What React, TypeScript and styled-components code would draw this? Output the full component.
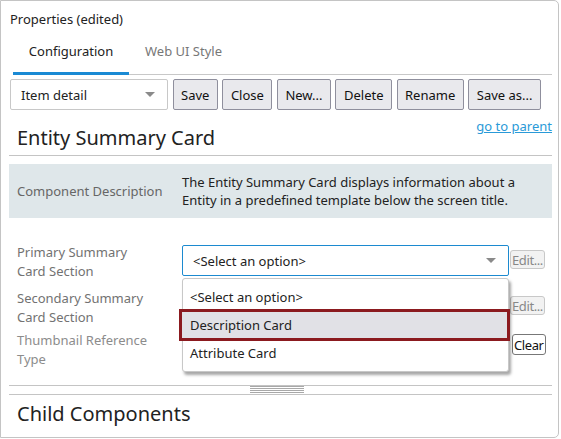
import styled, { createGlobalStyle } from "styled-components";

const GlobalStyle = createGlobalStyle`
  * { box-sizing: border-box; }
  body {
    margin: 0;
    background: #ffffff;
    font-family: "Segoe UI", "Noto Sans", sans-serif;
    font-size: 13px;
    color: #222;
  }
`;

const Panel = styled.div`
  position: relative;
  width: 559px;
  height: 438px;
  border: 1px solid #c4c4c4;
  border-radius: 0 5px 5px 0;
  padding: 0 6px 0 8px;
  overflow: hidden;
`;

const Title = styled.div`
  height: 37px;
  line-height: 37px;
  padding-left: 1px;
`;

const TabBar = styled.div`
  display: flex;
  margin-left: 4px;
  border-bottom: 1px solid #c8c8c8;
  height: 37px;
`;

const Tab = styled.div<{ $active?: boolean }>`
  display: flex;
  align-items: center;
  justify-content: center;
  height: 37px;
  padding: 0 16px 9px;
  width: ${(p) => (p.$active ? "116px" : "auto")};
  margin-bottom: -1px;
  color: ${(p) => (p.$active ? "#222" : "#777")};
  border-bottom: 3px solid ${(p) => (p.$active ? "#1a8ad4" : "transparent")};
`;

const Toolbar = styled.div`
  display: flex;
  align-items: center;
  gap: 4.5px;
  margin-top: 4px;
  height: 31px;
  padding-left: 1px;
`;

const SelectBox = styled.div<{ $focused?: boolean; $width: number }>`
  display: flex;
  align-items: center;
  justify-content: space-between;
  width: ${(p) => p.$width}px;
  height: 31px;
  padding: 0 10px;
  border: 1px solid ${(p) => (p.$focused ? "#1c8ad0" : "#c8c8c8")};
  border-radius: 2px;
  background: #fff;
`;

const Caret = styled.span`
  width: 0;
  height: 0;
  border-left: 5px solid transparent;
  border-right: 5px solid transparent;
  border-top: 5px solid #8a8a8a;
  margin-right: 2px;
`;

const Button = styled.button`
  height: 31px;
  padding: 0 7.5px;
  font: inherit;
  color: #111;
  background: #e9e9ed;
  border: 1px solid #8f8f9d;
  border-radius: 2px;
`;

const HeadingRow = styled.div`
  display: flex;
  justify-content: space-between;
  align-items: flex-start;
  border-bottom: 1px solid #c4c4c4;
  padding: 0 0 3px 0;
`;

const Heading = styled.div`
  margin-top: 14px;
  padding-left: 8px;
  font-size: 20px;
  line-height: 28px;
  color: #222;
`;

const ParentLink = styled.a`
  margin-top: 8px;
  line-height: 16px;
  color: #2a9ad8;
  text-decoration: underline;
`;

const Description = styled.div`
  display: grid;
  grid-template-columns: 165px 1fr;
  align-items: center;
  margin-top: 8px;
  height: 54px;
  padding-left: 8px;
  background: #dfe7ea;
`;

const DescLabel = styled.div`
  color: #666;
`;

const DescText = styled.div`
  line-height: 18px;
  color: #222;
`;

const Form = styled.div`
  position: relative;
  margin-top: 25px;
  padding-left: 8px;
`;

const Row = styled.div<{ $h: number }>`
  display: grid;
  grid-template-columns: 165px 327px auto;
  align-items: start;
  height: ${(p) => p.$h}px;
`;

const Label = styled.div<{ $muted?: boolean }>`
  line-height: 19px;
  color: ${(p) => (p.$muted ? "#8c8c8c" : "#727272")};
`;

const FieldSlot = styled.div`
  padding-top: 2px;
`;

const SmallButton = styled.button<{ $dark?: boolean; $top: number }>`
  justify-self: start;
  margin-top: ${(p) => p.$top}px;
  margin-left: ${(p) => (p.$dark ? 3 : 1)}px;
  height: ${(p) => (p.$dark ? 21 : 19)}px;
  padding: 0 1px;
  font: inherit;
  letter-spacing: -0.4px;
  color: ${(p) => (p.$dark ? "#111" : "#888")};
  background: ${(p) => (p.$dark ? "#fff" : "#f2f2f2")};
  border: 1px solid ${(p) => (p.$dark ? "#777" : "#c8c8c8")};
  border-radius: 3px;
`;

const Dropdown = styled.div`
  position: absolute;
  top: 35px;
  left: 173px;
  width: 327px;
  height: 94px;
  padding-top: 4px;
  background: #fff;
  border: 1px solid #c8c8c8;
  border-radius: 3px;
  box-shadow: 2px 3px 3px rgba(0, 0, 0, 0.35);
`;

const Option = styled.div<{ $selected?: boolean }>`
  height: 28px;
  line-height: 28px;
  background: ${(p) => (p.$selected ? "#e1e1e6" : "transparent")};
  outline: ${(p) => (p.$selected ? "3px solid #8b1a1f" : "none")};
  outline-offset: -1px;
  margin-left: ${(p) => (p.$selected ? "-2px" : "0")};
  padding-left: ${(p) => (p.$selected ? "9px" : "7px")};
`;

const Splitter = styled.div`
  display: flex;
  justify-content: center;
  margin-top: 16px;
  height: 10px;
  border-top: 1px solid #c4c4c4;
  border-bottom: 1px solid #c4c4c4;
`;

const Grip = styled.div`
  width: 54px;
  height: 8px;
  margin-right: 8px;
  background: repeating-linear-gradient(
    to bottom,
    #a8a8a8 0,
    #a8a8a8 1px,
    transparent 1px,
    transparent 2px
  );
`;

const ChildHeading = styled.div`
  padding-left: 8px;
  margin-top: 5px;
  font-size: 20px;
  line-height: 28px;
  color: #222;
`;

export default function App() {
  return (
    <>
      <GlobalStyle />
      <Panel>
        <Title>Properties (edited)</Title>
        <TabBar>
          <Tab $active>Configuration</Tab>
          <Tab>Web UI Style</Tab>
        </TabBar>
        <Toolbar>
          <SelectBox $width={158}>
            <span>Item detail</span>
            <Caret />
          </SelectBox>
          <Button>Save</Button>
          <Button>Close</Button>
          <Button>New...</Button>
          <Button>Delete</Button>
          <Button>Rename</Button>
          <Button>Save as...</Button>
        </Toolbar>
        <HeadingRow>
          <Heading>Entity Summary Card</Heading>
          <ParentLink>go to parent</ParentLink>
        </HeadingRow>
        <Description>
          <DescLabel>Component Description</DescLabel>
          <DescText>
            The Entity Summary Card displays information about a Entity in a predefined template below the screen title.
          </DescText>
        </Description>
        <Form>
          <Row $h={46}>
            <Label>
              Primary Summary
              <br />
              Card Section
            </Label>
            <FieldSlot>
              <SelectBox $focused $width={327}>
                <span>&lt;Select an option&gt;</span>
                <Caret />
              </SelectBox>
            </FieldSlot>
            <SmallButton $top={7}>Edit...</SmallButton>
          </Row>
          <Row $h={42}>
            <Label>
              Secondary Summary
              <br />
              Card Section
            </Label>
            <div />
            <SmallButton $top={7}>Edit...</SmallButton>
          </Row>
          <Row $h={38}>
            <Label $muted>
              Thumbnail Reference
              <br />
              Type
            </Label>
            <div />
            <SmallButton $dark $top={3}>Clear</SmallButton>
          </Row>
          <Dropdown>
            <Option>&lt;Select an option&gt;</Option>
            <Option $selected>Description Card</Option>
            <Option>Attribute Card</Option>
          </Dropdown>
        </Form>
        <Splitter>
          <Grip />
        </Splitter>
        <ChildHeading>Child Components</ChildHeading>
      </Panel>
    </>
  );
}
